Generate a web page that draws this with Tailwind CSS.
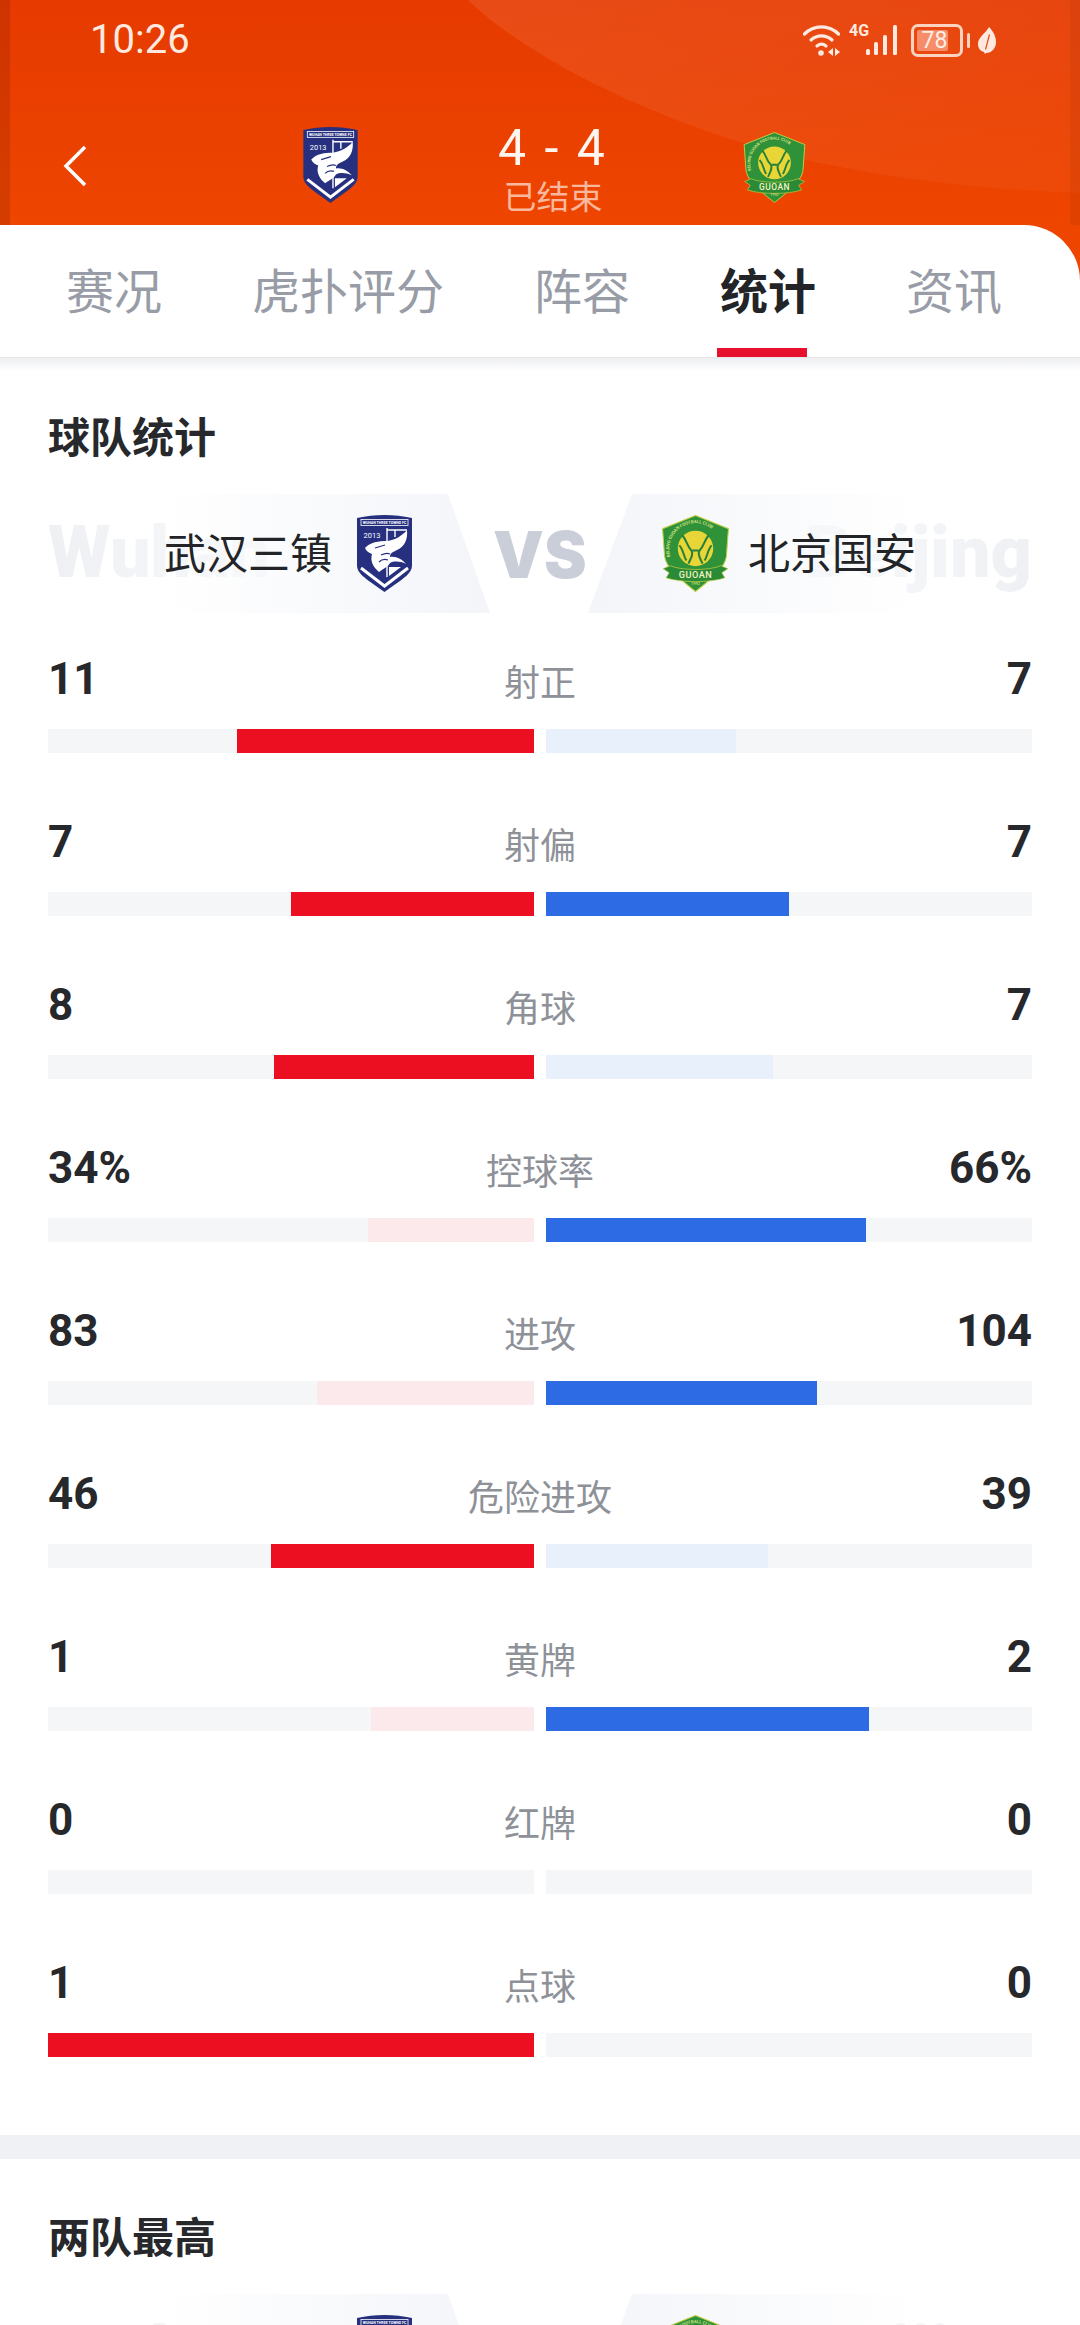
<!DOCTYPE html>
<html lang="zh-CN">
  <head>
    <meta charset="UTF-8">
    <meta name="viewport" content="width=device-width, initial-scale=1.0">
    <title>球队统计</title>
    <script src="https://cdn.jsdelivr.net/npm/@tailwindcss/browser@4"></script>
  </head>
  <body class="w-[1080px] h-[2325px] overflow-hidden bg-white font-['Roboto','Noto_Sans_CJK_SC',sans-serif]">
    <!-- shared crests -->
    <svg class="hidden">
      <symbol id="crest-wuhan" viewBox="0 0 55 77">
        <path d="M0 3C18-1 37-1 55 3V50C55 58 49 62 27.500 77C6 62 0 58 0 50Z" fill="#26307f"/>
        <rect x="4" y="4.500" width="47" height="6" fill="none" stroke="#fff" stroke-width=".8"/>
        <text x="27.500" y="9" text-anchor="middle" font-size="3.600" font-weight="700" fill="#fff" font-family="Roboto">WUHAN THREE TOWNS FC</text>
        <text x="15" y="23" text-anchor="middle" font-size="7.500" fill="#fff" font-family="Roboto">2013</text>
        <path d="M30 13V62M30 15H50M38 15V22" fill="none" stroke="#fff" stroke-width="1.400"/>
        <path d="M32 52H44L32 61Z" fill="#fff"/>
        <path d="M8 33C13 27 22 26 30 26C38 25 45 21 50 15C51 25 47 32 40 35C36 37 33 38 33 42C39 41 45 44 49 49C43 46 37 46 33 48C31 52 27 53 22 57C16 52 13 46 15 39C12 38 9 36 8 33Z" fill="#fff"/>
        <path d="M18 33L28 30M24 40C28 38 31 38 33 39M22 47C25 44 28 44 31 45" fill="none" stroke="#26307f" stroke-width="1.300"/>
        <path d="M4 53L27.500 71L51 53" fill="none" stroke="#fff" stroke-width="3"/>
      </symbol>
      <symbol id="crest-guoan" viewBox="0 0 66 76">
        <path d="M33 .500L65.500 13.500L63.500 41C62 52 50 62 33 75.500C16 62 4 52 2.500 41L.500 13.500Z" fill="#2f9238" stroke="#c2cf45" stroke-width="1"/>
        <path id="guoan-arc" d="M9 44A26 26 0 1 1 57 44" fill="none"/>
        <text font-size="4.300" font-weight="500" fill="#e4e98f" font-family="Roboto"><textPath href="#guoan-arc" startOffset="3">BEIJING GUOAN FOOTBALL CLUB</textPath></text>
        <circle cx="33" cy="33" r="17.500" fill="#e8d538"/>
        <path d="M20 20C25 26 24 30 29 35C31 38 29 42 26 48M46 20C41 26 42 30 37 35C35 38 37 42 40 48M17 30C21 34 21 40 24 45M49 30C45 34 45 40 42 45M30 35H36" fill="none" stroke="#25803a" stroke-width="2"/>
        <path d="M1 53L8 50C18 55 48 55 58 50L65 53L59 57L62 62C48 67 18 67 4 62L7 57Z" fill="#2a8a35" stroke="#c2cf45" stroke-width=".7"/>
        <text x="33" y="62" text-anchor="middle" font-size="9" font-weight="500" letter-spacing=".5" fill="#f5f3c4" font-family="Roboto">GUOAN</text>
        <text x="33" y="69" text-anchor="middle" font-size="4" fill="#e4e98f" font-family="Roboto">1992</text>
      </symbol>
    </svg>

    <!-- orange header -->
    <header class="relative h-[225px] overflow-hidden bg-linear-to-b from-[#e63a00] to-[#ee4500]">
      <svg class="absolute inset-0" width="1080" height="225" viewBox="0 0 1080 225">
        <defs>
          <linearGradient id="sheen" x1="0" y1="0" x2="1" y2="1">
            <stop offset="0" stop-color="#fff" stop-opacity=".09"/>
            <stop offset="1" stop-color="#fff" stop-opacity=".03"/>
          </linearGradient>
        </defs>
        <path d="M468 0C540 70 700 140 830 165C930 185 1010 190 1080 193V0Z" fill="url(#sheen)"/>
      </svg>
      <div class="absolute inset-y-0 left-0 w-[10px] bg-black/10"></div>
      <div class="absolute inset-y-0 right-0 w-[10px] bg-black/5"></div>

      <!-- status bar -->
      <div class="relative flex h-[80px] items-center pl-[90px] text-[#fde9df]">
        <span class="w-[713px] text-[40px] leading-none">10:26</span>
        <svg width="37" height="34" viewBox="0 0 37 34" fill="none" stroke="currentColor" stroke-width="3.200" stroke-linecap="round">
          <path d="M1.500 11C11 1.500 26 1.500 35.500 11"/>
          <path d="M8 17C14 11.500 23 11.500 29 17"/>
          <path d="M14 23C17 20.500 20 20.500 23 23"/>
          <circle cx="18" cy="30" r="2.800" fill="currentColor" stroke="none"/>
          <path d="M30 25L25 29L30 33ZM32 25L37 29L32 33Z" fill="currentColor" stroke="none"/>
        </svg>
        <span class="ml-[9px] mb-[18px] w-[18px] text-[16px] leading-none font-bold">4G</span>
        <svg class="ml-[-1px]" width="33" height="31" viewBox="0 0 33 31" fill="currentColor">
          <rect x="0" y="24" width="4" height="6" rx="1.500"/>
          <rect x="8" y="17" width="4" height="13" rx="1.500"/>
          <rect x="17" y="10" width="4" height="20" rx="1.500"/>
          <rect x="27" y="0" width="4" height="30" rx="1.500"/>
        </svg>
        <div class="relative ml-[12px] flex h-[33px] w-[52px] rounded-[7px] border-[3px] border-[#fbd3c0] p-[3px]">
          <div class="w-[31px] rounded-[2px] bg-[#f68c68]"></div>
          <span class="absolute inset-0 flex items-center justify-center pr-[5px] text-[23px] leading-none text-[#fdeee6]">78</span>
        </div>
        <div class="ml-[4px] h-[15px] w-[3px] rounded-full bg-[#fbd3c0]"></div>
        <svg class="ml-[8px]" width="18" height="27" viewBox="0 0 18 27" fill="currentColor">
          <path d="M11 0C15 4 18 9 18 15C18 21 14 26 8 26L7 27L6 25C2 24 0 21 0 17C0 10 7 7 11 0ZM11 7L7 22L8 23L12 8Z" fill-rule="evenodd"/>
        </svg>
      </div>

      <!-- match summary -->
      <div class="relative flex h-[145px] items-start pt-[47px] text-white">
        <svg class="ml-[63px] mt-[18px]" width="24" height="42" viewBox="0 0 24 42" fill="none" stroke="#fff" stroke-width="3.500">
          <path d="M22 2L3 21L22 40"/>
        </svg>
        <svg class="ml-[216px]" width="55" height="76"><use href="#crest-wuhan"/></svg>
        <div class="ml-[115px] mt-[-1px] flex w-[160px] flex-col items-center">
          <span class="whitespace-pre text-[50px] leading-[44px] tracking-[3px] text-[#fff6f0]">4 - 4</span>
          <span class="mt-[9px] text-[33px] leading-[38px] text-[#f9b89d]">已结束</span>
        </div>
        <svg class="ml-[109px] mt-[5px]" width="65" height="71"><use href="#crest-guoan"/></svg>
      </div>
    </header>

    <!-- tabs -->
    <div class="bg-[#ee4500]">
      <nav class="flex h-[132px] gap-[90px] rounded-tr-[56px] bg-white pl-[66px] pt-[44px] text-[48px] leading-[48px] text-[#989ca6]">
        <span>赛况</span>
        <span>虎扑评分</span>
        <span>阵容</span>
        <span class="relative font-bold text-[#222427]">统计<i class="absolute left-[-3px] top-[79px] h-[9px] w-[90px] bg-[#e8112d]"></i></span>
        <span>资讯</span>
      </nav>
    </div>
    <div class="h-[14px] border-t border-[#e6e7e9] bg-linear-to-b from-[#eeeff1] to-white"></div>

    <!-- team stats -->
    <section class="mt-[-14px] px-[48px] pt-[61px]">
      <h2 class="text-[42px] leading-[42px] font-bold text-[#26282c]">球队统计</h2>
      <div class="relative mt-[34px] h-[119px]">
        <span class="absolute left-0 top-[17px] bg-linear-to-r from-[#eef0f3] to-[#f8f9fb] bg-clip-text text-[72px] leading-[84px] font-black text-transparent">Wuhan</span>
        <span class="absolute right-0 top-[17px] bg-linear-to-r from-[#f8f9fb] to-[#eef0f3] bg-clip-text text-[72px] leading-[84px] font-black text-transparent">Beijing</span>
        <div class="absolute inset-y-0 left-[112px] w-[330px] bg-linear-to-r from-white/0 to-[#f3f5f9] [clip-path:polygon(0_0,288px_0,100%_100%,0_100%)]"></div>
        <div class="absolute inset-y-0 left-[540px] w-[330px] bg-linear-to-l from-white/0 to-[#f3f5f9] [clip-path:polygon(44px_0,100%_0,100%_100%,0_100%)]"></div>
        <div class="relative flex h-full items-center">
          <div class="flex w-[364px] items-center justify-end gap-[25px] text-[42px] leading-none text-[#222427]">
            <span class="mt-[3px]">武汉三镇</span>
            <svg width="55" height="77"><use href="#crest-wuhan"/></svg>
          </div>
          <span class="ml-[81px] mt-[2px] w-[91px] text-center font-['Inter',sans-serif] text-[64px] leading-none font-black text-[#c9ced8]">VS</span>
          <div class="ml-[77px] flex items-center gap-[18px] text-[42px] leading-none text-[#222427]">
            <svg width="69" height="77"><use href="#crest-guoan"/></svg>
            <span class="mt-[3px]">北京国安</span>
          </div>
        </div>
      </div>

      <div class="mt-[36px]">
        <div class="pb-[59px]">
          <div class="grid h-[60px] grid-cols-[1fr_auto_1fr] items-center text-[44px] leading-none font-bold text-[#26282c]"><span>11</span><span class="mt-[10px] text-[36px] font-normal text-[#8e9198]">射正</span><span class="text-right">7</span></div>
          <div class="mt-[20px] flex h-[24px] justify-between">
            <div class="flex w-[486px] justify-end bg-[#f5f6f8]"><div class="w-[297px] bg-[#ec0f22]"></div></div>
            <div class="w-[486px] bg-[#f5f6f8]"><div class="h-full w-[190px] bg-[#e8f0fc]"></div></div>
          </div>
        </div>
        <div class="pb-[59px]">
          <div class="grid h-[60px] grid-cols-[1fr_auto_1fr] items-center text-[44px] leading-none font-bold text-[#26282c]"><span>7</span><span class="mt-[10px] text-[36px] font-normal text-[#8e9198]">射偏</span><span class="text-right">7</span></div>
          <div class="mt-[20px] flex h-[24px] justify-between">
            <div class="flex w-[486px] justify-end bg-[#f5f6f8]"><div class="w-[243px] bg-[#ec0f22]"></div></div>
            <div class="w-[486px] bg-[#f5f6f8]"><div class="h-full w-[243px] bg-[#2d6be4]"></div></div>
          </div>
        </div>
        <div class="pb-[59px]">
          <div class="grid h-[60px] grid-cols-[1fr_auto_1fr] items-center text-[44px] leading-none font-bold text-[#26282c]"><span>8</span><span class="mt-[10px] text-[36px] font-normal text-[#8e9198]">角球</span><span class="text-right">7</span></div>
          <div class="mt-[20px] flex h-[24px] justify-between">
            <div class="flex w-[486px] justify-end bg-[#f5f6f8]"><div class="w-[260px] bg-[#ec0f22]"></div></div>
            <div class="w-[486px] bg-[#f5f6f8]"><div class="h-full w-[227px] bg-[#e8f0fc]"></div></div>
          </div>
        </div>
        <div class="pb-[59px]">
          <div class="grid h-[60px] grid-cols-[1fr_auto_1fr] items-center text-[44px] leading-none font-bold text-[#26282c]"><span>34%</span><span class="mt-[10px] text-[36px] font-normal text-[#8e9198]">控球率</span><span class="text-right">66%</span></div>
          <div class="mt-[20px] flex h-[24px] justify-between">
            <div class="flex w-[486px] justify-end bg-[#f5f6f8]"><div class="w-[166px] bg-[#fbe9eb]"></div></div>
            <div class="w-[486px] bg-[#f5f6f8]"><div class="h-full w-[320px] bg-[#2d6be4]"></div></div>
          </div>
        </div>
        <div class="pb-[59px]">
          <div class="grid h-[60px] grid-cols-[1fr_auto_1fr] items-center text-[44px] leading-none font-bold text-[#26282c]"><span>83</span><span class="mt-[10px] text-[36px] font-normal text-[#8e9198]">进攻</span><span class="text-right">104</span></div>
          <div class="mt-[20px] flex h-[24px] justify-between">
            <div class="flex w-[486px] justify-end bg-[#f5f6f8]"><div class="w-[217px] bg-[#fbe9eb]"></div></div>
            <div class="w-[486px] bg-[#f5f6f8]"><div class="h-full w-[271px] bg-[#2d6be4]"></div></div>
          </div>
        </div>
        <div class="pb-[59px]">
          <div class="grid h-[60px] grid-cols-[1fr_auto_1fr] items-center text-[44px] leading-none font-bold text-[#26282c]"><span>46</span><span class="mt-[10px] text-[36px] font-normal text-[#8e9198]">危险进攻</span><span class="text-right">39</span></div>
          <div class="mt-[20px] flex h-[24px] justify-between">
            <div class="flex w-[486px] justify-end bg-[#f5f6f8]"><div class="w-[263px] bg-[#ec0f22]"></div></div>
            <div class="w-[486px] bg-[#f5f6f8]"><div class="h-full w-[222px] bg-[#e8f0fc]"></div></div>
          </div>
        </div>
        <div class="pb-[59px]">
          <div class="grid h-[60px] grid-cols-[1fr_auto_1fr] items-center text-[44px] leading-none font-bold text-[#26282c]"><span>1</span><span class="mt-[10px] text-[36px] font-normal text-[#8e9198]">黄牌</span><span class="text-right">2</span></div>
          <div class="mt-[20px] flex h-[24px] justify-between">
            <div class="flex w-[486px] justify-end bg-[#f5f6f8]"><div class="w-[163px] bg-[#fbe9eb]"></div></div>
            <div class="w-[486px] bg-[#f5f6f8]"><div class="h-full w-[323px] bg-[#2d6be4]"></div></div>
          </div>
        </div>
        <div class="pb-[59px]">
          <div class="grid h-[60px] grid-cols-[1fr_auto_1fr] items-center text-[44px] leading-none font-bold text-[#26282c]"><span>0</span><span class="mt-[10px] text-[36px] font-normal text-[#8e9198]">红牌</span><span class="text-right">0</span></div>
          <div class="mt-[20px] flex h-[24px] justify-between">
            <div class="w-[486px] bg-[#f5f6f8]"></div>
            <div class="w-[486px] bg-[#f5f6f8]"></div>
          </div>
        </div>
        <div class="pb-[78px]">
          <div class="grid h-[60px] grid-cols-[1fr_auto_1fr] items-center text-[44px] leading-none font-bold text-[#26282c]"><span>1</span><span class="mt-[10px] text-[36px] font-normal text-[#8e9198]">点球</span><span class="text-right">0</span></div>
          <div class="mt-[20px] flex h-[24px] justify-between">
            <div class="w-[486px] bg-[#ec0f22]"></div>
            <div class="w-[486px] bg-[#f5f6f8]"></div>
          </div>
        </div>
      </div>
    </section>

    <div class="h-[24px] bg-[#eff1f4]"></div>

    <!-- team bests -->
    <section class="px-[48px] pt-[59px]">
      <h2 class="text-[42px] leading-[42px] font-bold text-[#26282c]">两队最高</h2>
      <div class="relative mt-[34px] h-[119px]">
        <span class="absolute left-0 top-[17px] bg-linear-to-r from-[#eef0f3] to-[#f8f9fb] bg-clip-text text-[72px] leading-[84px] font-black text-transparent">Wuhan</span>
        <span class="absolute right-0 top-[17px] bg-linear-to-r from-[#f8f9fb] to-[#eef0f3] bg-clip-text text-[72px] leading-[84px] font-black text-transparent">Beijing</span>
        <div class="absolute inset-y-0 left-[112px] w-[330px] bg-linear-to-r from-white/0 to-[#f3f5f9] [clip-path:polygon(0_0,288px_0,100%_100%,0_100%)]"></div>
        <div class="absolute inset-y-0 left-[540px] w-[330px] bg-linear-to-l from-white/0 to-[#f3f5f9] [clip-path:polygon(44px_0,100%_0,100%_100%,0_100%)]"></div>
        <div class="relative flex h-full items-center">
          <div class="flex w-[364px] items-center justify-end gap-[25px] text-[42px] leading-none text-[#222427]">
            <span class="mt-[3px]">武汉三镇</span>
            <svg width="55" height="77"><use href="#crest-wuhan"/></svg>
          </div>
          <span class="ml-[81px] mt-[2px] w-[91px] text-center font-['Inter',sans-serif] text-[64px] leading-none font-black text-[#c9ced8]">VS</span>
          <div class="ml-[77px] flex items-center gap-[18px] text-[42px] leading-none text-[#222427]">
            <svg width="69" height="77"><use href="#crest-guoan"/></svg>
            <span class="mt-[3px]">北京国安</span>
          </div>
        </div>
      </div>
    </section>
  </body>
</html>
